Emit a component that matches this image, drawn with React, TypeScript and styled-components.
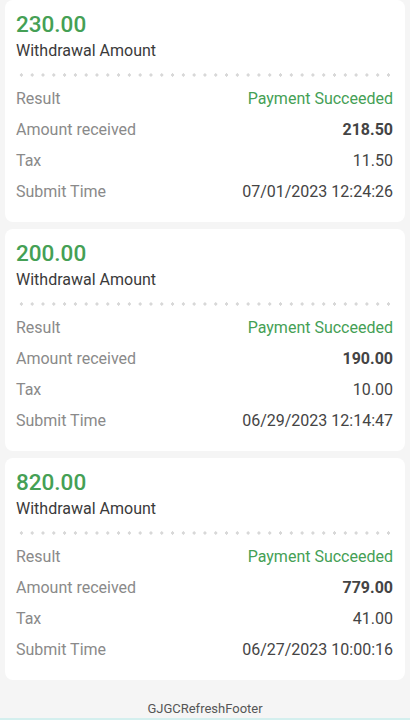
import React from "react";
import styled, { createGlobalStyle } from "styled-components";

const GlobalStyle = createGlobalStyle`
  html, body {
    margin: 0;
    padding: 0;
    background: #f5f5f5;
    font-family: Roboto, "Liberation Sans", Arial, sans-serif;
  }
`;

const Page = styled.div`
  display: flex;
  flex-direction: column;
  width: 410px;
  height: 720px;
  overflow: hidden;
  box-sizing: border-box;
`;

const List = styled.div`
  display: flex;
  flex-direction: column;
  gap: 7px;
  padding: 0 5px;
`;

const Card = styled.div`
  display: flex;
  flex-direction: column;
  height: 222px;
  box-sizing: border-box;
  padding: 10px 12px 0 11px;
  background: #fff;
  border-radius: 8px;
`;

const Amount = styled.div`
  font-size: 22.5px;
  line-height: 28px;
  font-weight: 500;
  color: #45a055;
`;

const AmountLabel = styled.div`
  margin-top: 3px;
  font-size: 16px;
  line-height: 20px;
  color: #3a3a3a;
`;

const Dots = styled.div`
  margin-top: 12px;
  height: 4px;
  background-image: radial-gradient(circle, #d8d8d8 1.5px, transparent 1.8px);
  background-size: 10.8px 4px;
  background-position: 0 0;
`;

const Rows = styled.div`
  display: flex;
  flex-direction: column;
  margin-top: 6px;
`;

const Row = styled.div`
  display: flex;
  justify-content: space-between;
  align-items: center;
  height: 31px;
  font-size: 16px;
`;

const Label = styled.span`
  color: #8a8a8a;
`;

const Value = styled.span<{ $tone?: "green" | "bold" }>`
  color: ${(p) => (p.$tone === "green" ? "#45a055" : "#444")};
  font-weight: ${(p) => (p.$tone === "bold" ? 700 : 400)};
`;

const Footer = styled.div`
  margin-top: auto;
  display: flex;
  justify-content: center;
  align-items: flex-end;
  height: 30px;
  padding-bottom: 2px;
  font-size: 13px;
  color: #555;
  border-bottom: 2px solid #d3efee;
`;

const records = [
  { amount: "230.00", received: "218.50", tax: "11.50", time: "07/01/2023 12:24:26" },
  { amount: "200.00", received: "190.00", tax: "10.00", time: "06/29/2023 12:14:47" },
  { amount: "820.00", received: "779.00", tax: "41.00", time: "06/27/2023 10:00:16" },
];

const App: React.FC = () => {
  return (
    <Page>
      <GlobalStyle />
      <List>
        {records.map((r) => (
          <Card key={r.time}>
            <Amount>{r.amount}</Amount>
            <AmountLabel>Withdrawal Amount</AmountLabel>
            <Dots />
            <Rows>
              <Row>
                <Label>Result</Label>
                <Value $tone="green">Payment Succeeded</Value>
              </Row>
              <Row>
                <Label>Amount received</Label>
                <Value $tone="bold">{r.received}</Value>
              </Row>
              <Row>
                <Label>Tax</Label>
                <Value>{r.tax}</Value>
              </Row>
              <Row>
                <Label>Submit Time</Label>
                <Value>{r.time}</Value>
              </Row>
            </Rows>
          </Card>
        ))}
      </List>
      <Footer>GJGCRefreshFooter</Footer>
    </Page>
  );
};

export default App;
